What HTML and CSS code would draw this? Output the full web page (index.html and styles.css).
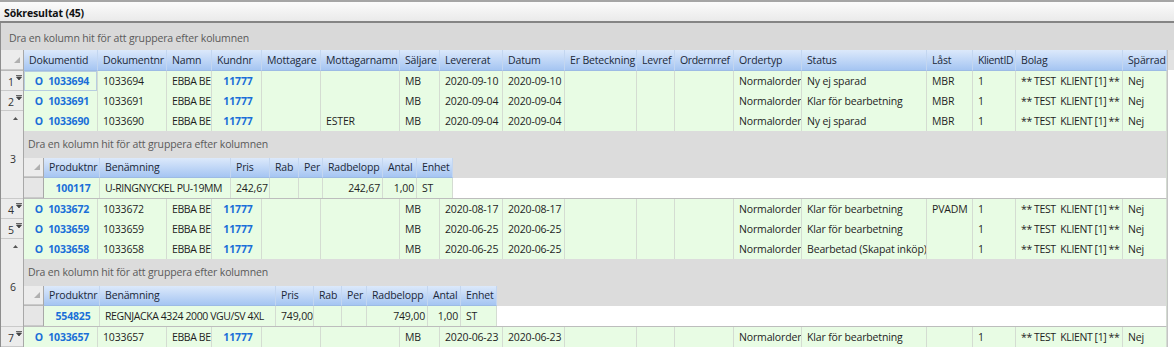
FILE: index.html
```html
<!DOCTYPE html>
<html lang="sv">
<head>
    <meta charset="UTF-8">
    <title>Sökresultat</title>
    <link rel="stylesheet" href="styles.css">
</head>
<body>
<div class="panel">
    <div class="title">Sökresultat (45)</div>
    <div class="group-panel">Dra en kolumn hit för att gruppera efter kolumnen</div>
    <div class="grid-body">
        <table class="main">
            <colgroup>
                <col class="w-ind"><col class="w74"><col class="w69"><col class="w45"><col class="w50">
                <col class="w59"><col class="w79"><col class="w40"><col class="w63"><col class="w62">
                <col class="w72"><col class="w38"><col class="w59"><col class="w68"><col class="w125">
                <col class="w46"><col class="w43"><col class="w107"><col class="w44">
            </colgroup>
            <thead>
            <tr>
                <th class="ind-head"><svg class="corner" width="6" height="6" viewBox="0 0 6 6"><path d="M6 0V6H0Z"/></svg></th>
                <th>Dokumentid</th><th>Dokumentnr</th><th>Namn</th><th>Kundnr</th><th>Mottagare</th>
                <th>Mottagarnamn</th><th>Säljare</th><th>Levererat</th><th>Datum</th><th>Er Beteckning</th>
                <th>Levref</th><th class="caps">Ordernrref</th><th>Ordertyp</th><th>Status</th><th>Låst</th>
                <th class="caps">KlientID</th><th>Bolag</th><th>Spärrad</th>
            </tr>
            </thead>
            <tbody>
            <tr class="row">
                <td class="ind">1<svg class="exp" width="6" height="6" viewBox="0 0 6 6"><path d="M0 0.5H6M0.5 2H5.5L3 5Z"/></svg></td>
                <td class="link focus">O&nbsp; 1033694</td><td>1033694</td><td class="caps">EBBA BE</td><td class="link">11777</td><td></td>
                <td></td><td>MB</td><td>2020-09-10</td><td>2020-09-10</td><td></td>
                <td></td><td></td><td>Normalorder</td><td>Ny ej sparad</td><td>MBR</td>
                <td>1</td><td class="pre caps">** TEST  KLIENT [1] **</td><td>Nej</td>
            </tr>
            <tr class="row">
                <td class="ind">2<svg class="exp" width="6" height="6" viewBox="0 0 6 6"><path d="M0 0.5H6M0.5 2H5.5L3 5Z"/></svg></td>
                <td class="link">O&nbsp; 1033691</td><td>1033691</td><td class="caps">EBBA BE</td><td class="link">11777</td><td></td>
                <td></td><td>MB</td><td>2020-09-04</td><td>2020-09-04</td><td></td>
                <td></td><td></td><td>Normalorder</td><td>Klar för bearbetning</td><td>MBR</td>
                <td>1</td><td class="pre caps">** TEST  KLIENT [1] **</td><td>Nej</td>
            </tr>
            <tr class="row">
                <td class="ind open" rowspan="2">
                    <div class="ind-stack">
                        <svg class="caret" width="5" height="3" viewBox="0 0 5 3"><path d="M0 3L2.5 0L5 3Z"/></svg>
                        <span class="ind-num">3</span>
                    </div>
                </td>
                <td class="link">O&nbsp; 1033690</td><td>1033690</td><td class="caps">EBBA BE</td><td class="link">11777</td><td></td>
                <td>ESTER</td><td>MB</td><td>2020-09-04</td><td>2020-09-04</td><td></td>
                <td></td><td></td><td>Normalorder</td><td>Ny ej sparad</td><td>MBR</td>
                <td>1</td><td class="pre caps">** TEST  KLIENT [1] **</td><td>Nej</td>
            </tr>
            <tr class="detail">
                <td class="detail-cell" colspan="18">
                    <div class="group-panel sub">Dra en kolumn hit för att gruppera efter kolumnen</div>
                    <table class="nested">
                        <colgroup>
                            <col class="n-ind"><col class="w56"><col class="w131"><col class="w39"><col class="w29">
                            <col class="w24"><col class="w60"><col class="w34"><col class="w36"><col>
                        </colgroup>
                        <thead>
                        <tr>
                            <th class="ind-head"><svg class="corner" width="6" height="6" viewBox="0 0 6 6"><path d="M6 0V6H0Z"/></svg></th>
                            <th>Produktnr</th><th>Benämning</th><th>Pris</th><th>Rab</th><th>Per</th>
                            <th>Radbelopp</th><th>Antal</th><th>Enhet</th><th class="fill"></th>
                        </tr>
                        </thead>
                        <tbody>
                        <tr class="row">
                            <td class="ind"></td>
                            <td class="link">100117</td><td class="caps">U-RINGNYCKEL PU-19MM</td><td>242,67</td><td></td><td></td>
                            <td class="num">242,67</td><td class="num">1,00</td><td>ST</td><td class="fill"></td>
                        </tr>
                        </tbody>
                    </table>
                </td>
            </tr>
            <tr class="row">
                <td class="ind">4<svg class="exp" width="6" height="6" viewBox="0 0 6 6"><path d="M0 0.5H6M0.5 2H5.5L3 5Z"/></svg></td>
                <td class="link">O&nbsp; 1033672</td><td>1033672</td><td class="caps">EBBA BE</td><td class="link">11777</td><td></td>
                <td></td><td>MB</td><td>2020-08-17</td><td>2020-08-17</td><td></td>
                <td></td><td></td><td>Normalorder</td><td>Klar för bearbetning</td><td>PVADM</td>
                <td>1</td><td class="pre caps">** TEST  KLIENT [1] **</td><td>Nej</td>
            </tr>
            <tr class="row">
                <td class="ind">5<svg class="exp" width="6" height="6" viewBox="0 0 6 6"><path d="M0 0.5H6M0.5 2H5.5L3 5Z"/></svg></td>
                <td class="link">O&nbsp; 1033659</td><td>1033659</td><td class="caps">EBBA BE</td><td class="link">11777</td><td></td>
                <td></td><td>MB</td><td>2020-06-25</td><td>2020-06-25</td><td></td>
                <td></td><td></td><td>Normalorder</td><td>Klar för bearbetning</td><td></td>
                <td>1</td><td class="pre caps">** TEST  KLIENT [1] **</td><td>Nej</td>
            </tr>
            <tr class="row">
                <td class="ind open" rowspan="2">
                    <div class="ind-stack">
                        <svg class="caret" width="5" height="3" viewBox="0 0 5 3"><path d="M0 3L2.5 0L5 3Z"/></svg>
                        <span class="ind-num">6</span>
                    </div>
                </td>
                <td class="link">O&nbsp; 1033658</td><td>1033658</td><td class="caps">EBBA BE</td><td class="link">11777</td><td></td>
                <td></td><td>MB</td><td>2020-06-25</td><td>2020-06-25</td><td></td>
                <td></td><td></td><td>Normalorder</td><td>Bearbetad (Skapat inköp)</td><td></td>
                <td>1</td><td class="pre caps">** TEST  KLIENT [1] **</td><td>Nej</td>
            </tr>
            <tr class="detail">
                <td class="detail-cell" colspan="18">
                    <div class="group-panel sub">Dra en kolumn hit för att gruppera efter kolumnen</div>
                    <table class="nested">
                        <colgroup>
                            <col class="n-ind"><col class="w56"><col class="w176"><col class="w38"><col class="w28">
                            <col class="w25"><col class="w61"><col class="w33"><col class="w36"><col>
                        </colgroup>
                        <thead>
                        <tr>
                            <th class="ind-head"><svg class="corner" width="6" height="6" viewBox="0 0 6 6"><path d="M6 0V6H0Z"/></svg></th>
                            <th>Produktnr</th><th>Benämning</th><th>Pris</th><th>Rab</th><th>Per</th>
                            <th>Radbelopp</th><th>Antal</th><th>Enhet</th><th class="fill"></th>
                        </tr>
                        </thead>
                        <tbody>
                        <tr class="row">
                            <td class="ind"></td>
                            <td class="link">554825</td><td class="caps">REGNJACKA 4324 2000 VGU/SV 4XL</td><td>749,00</td><td></td><td></td>
                            <td class="num">749,00</td><td class="num">1,00</td><td>ST</td><td class="fill"></td>
                        </tr>
                        </tbody>
                    </table>
                </td>
            </tr>
            <tr class="row">
                <td class="ind">7<svg class="exp" width="6" height="6" viewBox="0 0 6 6"><path d="M0 0.5H6M0.5 2H5.5L3 5Z"/></svg></td>
                <td class="link">O&nbsp; 1033657</td><td>1033657</td><td class="caps">EBBA BE</td><td class="link">11777</td><td></td>
                <td></td><td>MB</td><td>2020-06-23</td><td>2020-06-23</td><td></td>
                <td></td><td></td><td>Normalorder</td><td>Klar för bearbetning</td><td></td>
                <td>1</td><td class="pre caps">** TEST  KLIENT [1] **</td><td>Nej</td>
            </tr>
            <tr class="row">
                <td class="ind"></td>
                <td></td><td></td><td></td><td></td><td></td><td></td><td></td><td></td><td></td><td></td>
                <td></td><td></td><td></td><td></td><td></td><td></td><td></td><td></td>
            </tr>
            </tbody>
        </table>
        <div class="filler"></div>
    </div>
</div>
</body>
</html>
```

FILE: styles.css
```css
* {
    box-sizing: border-box;
}

body {
    margin: 0;
    font-family: "Open Sans", "Noto Sans", sans-serif;
    font-size: 10.5px;
    letter-spacing: -0.15px;
    color: #1e1e1e;
    background-color: white;
    overflow: hidden;
}

.panel {
    width: 1174px;
    height: 347px;
    border-top: 2px solid #a5a5a5;
    overflow: hidden;
}

.title {
    height: 21px;
    padding: 3px 0 0 4px;
    line-height: 16px;
    font-weight: bold;
    color: #111;
    background: linear-gradient(#fbfbfb, #eaeaea);
    border-bottom: 2px solid #858585;
}

.group-panel {
    height: 27px;
    padding: 3px 0 0 8px;
    line-height: 24px;
    color: #5a5a5a;
    background-color: #d9d9d9;
    border-left: 1px solid #8e8e8e;
}

.group-panel.sub {
    padding: 0 0 0 4px;
    line-height: 27px;
    border-left: none;
    background-color: transparent;
}

.grid-body {
    display: flex;
    border-left: 1px solid #8e8e8e;
}

.filler {
    flex: 1;
    background: linear-gradient(#e2e2e2 0 20px, white 20px);
    border-left: 1px solid #c4c4c4;
}

table {
    table-layout: fixed;
    border-collapse: separate;
    border-spacing: 0;
}

.main {
    width: 1166px;
}

th, td {
    padding: 0 2px 1px 5px;
    white-space: nowrap;
    overflow: hidden;
    text-align: left;
    font-weight: normal;
}

th {
    height: 20px;
    line-height: 18px;
    color: #1b2838;
    background: linear-gradient(#dce9fb, #a5c5f2);
    border-right: 1px solid #c3d6f0;
    border-bottom: 1px solid #9dbbe4;
}

td {
    height: 20px;
    line-height: 18px;
    border-right: 1px solid #d4dcd2;
}

.row td {
    background-color: #e8fce4;
}

.row td.ind,
th.ind-head {
    background: #ececec;
    border-right: 1px solid #a8a8a8;
    box-shadow: inset 0 -1px 0 #cacaca;
    padding: 1px 0 0 7px;
    color: #333;
}

th.ind-head {
    text-align: right;
    vertical-align: bottom;
    padding: 0 3px 2px 0;
    border-bottom: 1px solid #b8b8b8;
}

.corner {
    display: inline-block;
    fill: #b0b0b0;
}

.exp {
    vertical-align: top;
    margin: 2px 0 0 2px;
    stroke: #444;
    fill: #444;
}

.exp path {
    stroke-width: 0.8;
}

td.ind.open {
    background: #ececec;
    border-right: 1px solid #a8a8a8;
    box-shadow: inset 0 -1px 0 #cacaca;
    padding: 0;
    vertical-align: top;
}

.ind-stack {
    display: flex;
    flex-direction: column;
    height: 86px;
    padding: 6px 0 0 12px;
}

.caret {
    fill: #555;
}

.ind-num {
    margin: auto 0 auto -3px;
    color: #333;
    line-height: 14px;
}

.link {
    color: #1a6fd8;
    font-weight: bold;
    text-align: center;
}

.focus {
    box-shadow: inset 0 0 0 1px #b7cde0;
}

.caps {
    letter-spacing: -0.4px;
}

.pre {
    white-space: pre;
}

.num {
    text-align: right;
}

.w-ind { width: 23px; }
.n-ind { width: 20px; }
.w24 { width: 24px; }
.w25 { width: 25px; }
.w28 { width: 28px; }
.w29 { width: 29px; }
.w33 { width: 33px; }
.w34 { width: 34px; }
.w36 { width: 36px; }
.w38 { width: 38px; }
.w39 { width: 39px; }
.w40 { width: 40px; }
.w43 { width: 43px; }
.w44 { width: 44px; }
.w45 { width: 45px; }
.w46 { width: 46px; }
.w50 { width: 50px; }
.w56 { width: 56px; }
.w59 { width: 59px; }
.w60 { width: 60px; }
.w61 { width: 61px; }
.w62 { width: 62px; }
.w63 { width: 63px; }
.w68 { width: 68px; }
.w69 { width: 69px; }
.w72 { width: 72px; }
.w74 { width: 74px; }
.w79 { width: 79px; }
.w107 { width: 107px; }
.w125 { width: 125px; }
.w131 { width: 131px; }
.w176 { width: 176px; }

.detail-cell {
    padding: 0;
    height: 67px;
    background-color: #dcdcdc;
    border-bottom: 1px solid #bdbdbd;
    vertical-align: top;
}

.nested {
    width: 100%;
}

.nested th {
    height: 19px;
    line-height: 17px;
}

.nested td {
    height: 20px;
    line-height: 18px;
}

.nested th.fill {
    background: transparent;
    border: none;
}

.nested td.fill {
    background-color: white;
    border: none;
}

.nested .row td.ind {
    background: #e6e6e6;
}
```
